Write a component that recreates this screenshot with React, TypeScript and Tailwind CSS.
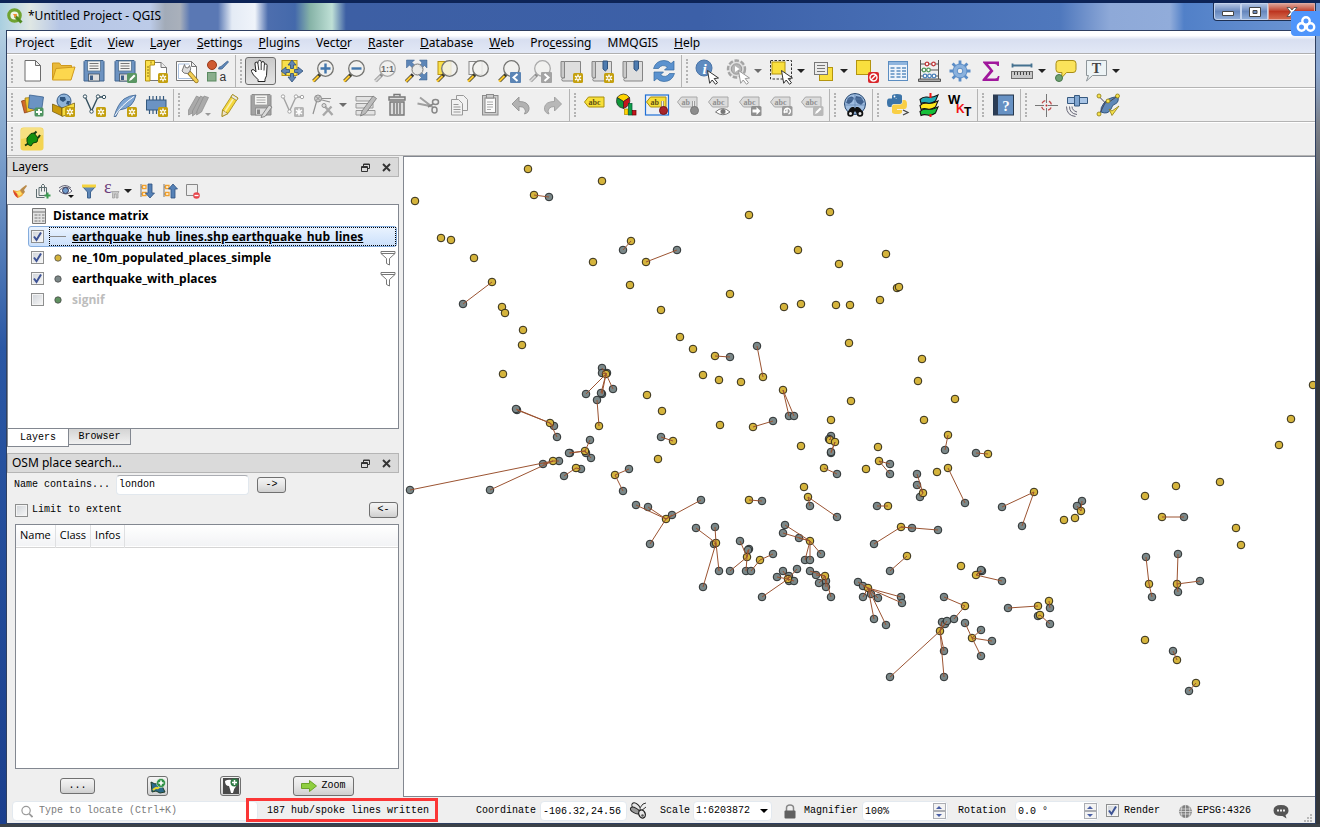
import { useState } from "react";
import type { ReactNode } from "react";

const uiFont = "font-['Noto_Sans','Open_Sans',sans-serif]";
const listFont = "font-['Open_Sans','Noto_Sans',sans-serif]";
const monoFont = "font-['Liberation_Mono',monospace]";

/* ---------- shared icon parts ---------- */

const Star = () => (
  <g>
    <rect x="14" y="14" width="10" height="10" rx="1.5" fill="#c4a010" />
    <path d="M19 15.5v7M16 17.2l6 3.6M22 17.2l-6 3.6" stroke="#fff" strokeWidth="1.5" />
    <circle cx="19" cy="19" r="1" fill="#c4a010" />
  </g>
);

const Lens = ({ gray, children }: { gray?: boolean; children?: ReactNode }) => (
  <g>
    <path d="M9 15.5L2.5 22" stroke={gray ? "#8c8c8c" : "#3b3b2a"} strokeWidth="3.6" />
    <path d="M7.5 17L2 22.5" stroke={gray ? "#d5d5d5" : "#fcc92f"} strokeWidth="2.2" />
    <circle cx="14.5" cy="9.5" r="7.8" fill="#f1f1ee" fillOpacity="0.85" stroke={gray ? "#a9a9a9" : "#757572"} strokeWidth="1.3" />
    {children}
  </g>
);

const Cursor = ({ gray }: { gray?: boolean }) => (
  <path
    d="M12.5 11.5l11 7.5-4.3.6 3.3 4.2-2 1.5-3.3-4.3-2.5 3.3z"
    fill="#fff"
    stroke={gray ? "#999" : "#333"}
    strokeWidth="1"
  />
);

const Floppy = ({ gray }: { gray?: boolean }) => (
  <g>
    <path d="M3 1.5h18l1 1v19.5h-20v-19.5z" fill={gray ? "#a3a3a3" : "#6d93c1"} stroke={gray ? "#8a8a8a" : "#41658f"} />
    <rect x="5.5" y="2" width="13" height="10" fill="#f3f3f1" stroke={gray ? "#999" : "#56748f"} strokeWidth="0.8" />
    <path d="M7.5 4.5h9M7.5 7h9M7.5 9.5h9" stroke={gray ? "#aaa" : "#777"} />
    <rect x="6.5" y="15" width="11" height="7" fill="#dedede" stroke={gray ? "#888" : "#456"} strokeWidth="0.8" />
    <rect x="8" y="16.5" width="3" height="4.5" fill={gray ? "#888" : "#3f5f87"} />
  </g>
);

const Tag = ({ gray, word = "abc" }: { gray?: boolean; word?: string }) => (
  <g>
    <path d="M1.5 9l4-5h15.5v10h-15.5z" fill={gray ? "#dcdcdc" : "#f7df39"} stroke={gray ? "#a8a8a8" : "#a98f0c"} />
    <text x="5.5" y="11.5" fontSize="8" fontWeight="bold" fontFamily="Liberation Serif, serif" fill={gray ? "#8f8f8f" : "#5b4d12"}>
      {word}
    </text>
  </g>
);

const MapPage = () => (
  <g>
    <path d="M2 2.5h3.5v16.5h-2q-1.5 0-1.5-2z" fill="#c9c9c9" stroke="#858585" />
    <path d="M5.5 2.5h16v19.5h-18q-1.5-1.5 0-3h2z" fill="#dedede" stroke="#858585" />
  </g>
);

const Pin = () => (
  <g>
    <path d="M17.5 8v8" stroke="#777" strokeWidth="2.4" />
    <path d="M17.5 8v8" stroke="#eee" strokeWidth="1.2" />
  </g>
);

const VNode = ({ color }: { color: string }) => (
  <g fill="none" stroke={color}>
    <path d="M3.5 4.5l6 13.5 6-13M17 4h4" strokeWidth="1.4" />
    <g fill="#fff">
      <circle cx="3" cy="3.5" r="1.7" />
      <circle cx="9.5" cy="18.5" r="1.7" />
      <circle cx="16" cy="3.5" r="1.7" />
      <circle cx="22" cy="4" r="1.7" />
    </g>
  </g>
);

const Pencil = ({ body, edge }: { body: string; edge: string }) => (
  <g stroke={edge} strokeWidth="0.8">
    <path d="M4.5 17l10-15.5 5.5 3.5-10 15.5-6 3z" fill={body} />
    <path d="M4.5 17l5.5 3.5-6 3z" fill="#eee3c8" />
    <path d="M7 18.5l10-15.5" stroke="#fff" strokeOpacity="0.6" strokeWidth="1.5" />
    <path d="M13 4l5.5 3.5 1.5-2.5-5.5-3.5z" fill="#e8e8e8" />
  </g>
);

const icons: Record<string, ReactNode> = {
  newProject: <path d="M5 1.5h10.5l5 5v15.5h-15.500zM15.500 1.5v5h5" fill="#fff" stroke="#6c6c6c" />,
  open: (
    <g stroke="#d09a1d">
      <path d="M1.5 20v-16h7l1.5 2.5h10.5v4" fill="#e9b93a" />
      <path d="M1.5 21l3.5-11.5 19-1.5-4 13z" fill="#fcd74e" />
    </g>
  ),
  save: <Floppy />,
  saveAs: (
    <g>
      <Floppy />
      <rect x="14" y="14" width="10" height="10" rx="1.5" fill="#5a9663" />
      <path d="M16 22l1-2.5 4-4 1.5 1.5-4 4z" fill="#fff" />
    </g>
  ),
  newLayout: (
    <g>
      <path d="M4 3.5h13l5.5 5v13h-18.5z" fill="#fff" stroke="#777" />
      <path d="M17 3.5v5h5.5" fill="#eee" stroke="#777" />
      <path d="M1.5 1.5h9v4.5h-4.5v16h-4.5z" fill="#fbe04c" stroke="#b08f10" />
      <path d="M3 8h2M3 11h2M3 14h2M3 17h2M7 2.5v2" stroke="#8d7313" />
      <Star />
    </g>
  ),
  layoutManager: (
    <g>
      <path d="M1.5 2.5h15l5 5v14h-20z" fill="#fff" stroke="#777" />
      <path d="M3.5 5h11M3.5 5v14.5h16" fill="none" stroke="#a9c0df" />
      <path d="M16.5 2.5v5h5z" fill="#eee" stroke="#777" />
      <path d="M13.5 13l8 9" stroke="#8b6c12" strokeWidth="4.2" strokeLinecap="round" />
      <path d="M15 14.5l6.5 7.5" stroke="#f3cf55" strokeWidth="2.8" strokeLinecap="round" />
      <path d="M9.5 5.5l1 3 2.5.5 1.5-2.5q2.5 3.5 0 6.5l-2 1.5q-4 .5-5.5-2.5z" fill="#ddd" stroke="#777" />
    </g>
  ),
  style: (
    <g>
      <circle cx="6" cy="6" r="4.5" fill="#cf5b32" stroke="#9a3b1b" />
      <path d="M12.5 10q0-2.5 2.5-2.5l6.500-5.500 1 1-5.500 6q0 1.500-4.500 1z" fill="#5f88b8" stroke="#335a87" strokeWidth="0.7" />
      <rect x="1.5" y="13.5" width="8.5" height="8.5" fill="#8aae8c" stroke="#5b8a61" />
      <text x="13.5" y="22" fontSize="12" fontFamily="Liberation Sans, sans-serif" fill="#333">
        a
      </text>
    </g>
  ),
  pan: (
    <g>
      <path
        d="M9 22.5v-2l-4.5-4.500-2-3.500q-.5-2 1.500-2 1 0 3 2.500l-1-8q-.2-1.800 1.200-1.900 1.300 0 1.600 1.600l.3-2q.3-1.400 1.600-1.400t1.500 1.500l.2 1q.3-1.300 1.600-1.200 1.300.1 1.400 1.600v1.500q.5-1 1.600-.8 1.200.3 1.100 1.800l-.6 10-1.500 3.500v2.300z"
        fill="#fff"
        stroke="#222"
      />
      <path d="M9 5l.8 6M12.200 4v7M15.300 6l-.3 5.500" stroke="#222" strokeWidth="0.9" />
    </g>
  ),
  panSelection: (
    <g>
      <rect x="2" y="1.5" width="15" height="15" fill="#f9e04b" stroke="#b99412" />
      <path
        d="M12 1l4 5h-2.5v3.5h-3v-3.5h-2.500zM12 23l-4-5h2.5v-3.5h3v3.5h2.500zM1 12l5-4v2.5h3.5v3h-3.5v2.500zM23 12l-5 4v-2.5h-3.5v-3h3.500v-2.500z"
        fill="#6086b5"
        stroke="#2f4f7a"
        strokeWidth="0.8"
      />
    </g>
  ),
  zoomIn: (
    <Lens>
      <path d="M14.5 4.5v10M9.5 9.5h10" stroke="#4377ad" strokeWidth="2.4" />
    </Lens>
  ),
  zoomOut: (
    <Lens>
      <path d="M9.5 9.5h10" stroke="#4377ad" strokeWidth="2.4" />
    </Lens>
  ),
  zoomNative: (
    <Lens gray>
      <text x="14.5" y="13" textAnchor="middle" fontSize="9" fontWeight="bold" fontFamily="Liberation Sans, sans-serif" fill="#6a6a6a">
        1:1
      </text>
    </Lens>
  ),
  zoomFull: (
    <g>
      <path
        d="M2.5 1h8l-2.5 2.5 3 3-2.5 2.5-3-3-3 3zM23 1v8l-2.5-2.5-3 3-2.5-2.5 3-3-2.5-3zM23 21h-8l2.5-2.5-3-3 2.5-2.5 3 3 3-3z"
        fill="#5d86b7"
        stroke="#375d8c"
        strokeWidth="0.5"
      />
      <path d="M9 15.5L2 22.5" stroke="#333" strokeWidth="3.4" />
      <path d="M7.5 17L2 22.5" stroke="#fcc92f" strokeWidth="2.2" />
      <circle cx="13.5" cy="10.5" r="5.5" fill="#e9e9e6" fillOpacity="0.85" stroke="#777" />
    </g>
  ),
  zoomSelection: (
    <g>
      <rect x="3" y="2.5" width="13" height="13" fill="#f9e04b" stroke="#b99412" />
      <Lens />
    </g>
  ),
  zoomLayer: (
    <g>
      <rect x="3" y="2.5" width="13" height="13" fill="#f5f5f5" stroke="#888" />
      <Lens />
    </g>
  ),
  zoomLast: (
    <g>
      <Lens />
      <rect x="13" y="13" width="11" height="11" rx="1" fill="#5c85b5" />
      <path d="M20.5 15l-4 3.5 4 3.5" fill="none" stroke="#fff" strokeWidth="2" />
    </g>
  ),
  zoomNext: (
    <g>
      <Lens gray />
      <rect x="13" y="13" width="11" height="11" rx="1" fill="#a4a4a4" />
      <path d="M16.5 15l4 3.5-4 3.5" fill="none" stroke="#fff" strokeWidth="2" />
    </g>
  ),
  newView: (
    <g>
      <MapPage />
      <Star />
    </g>
  ),
  newBookmark: (
    <g>
      <MapPage />
      <path d="M13 2h4.5v8l-2.2 2-2.3-2z" fill="#4d7bb0" stroke="#2e527f" />
      <Star />
    </g>
  ),
  bookmarks: (
    <g>
      <MapPage />
      <path d="M13 2h4.5v8l-2.2 2-2.3-2z" fill="#4d7bb0" stroke="#2e527f" />
    </g>
  ),
  refresh: (
    <g fill="#5b92cf" stroke="#34689f" strokeWidth="0.7">
      <path d="M1.5 9.5q2.500-8 10.500-8 4.500 0 7 3l3-2.500v9h-9.500l3-3q-5.500-3.500-9 1.500z" />
      <path d="M22.5 14.500q-2.500 8-10.500 8-4.500 0-7-3l-3 2.500v-9h9.500l-3 3q5.500 3.500 9-1.500z" />
    </g>
  ),
  identify: (
    <g>
      <circle cx="9" cy="9" r="8" fill="#5e8bc0" stroke="#4a75a8" />
      <text x="9.5" y="14.5" textAnchor="middle" fontSize="15" fontStyle="italic" fontWeight="bold" fontFamily="Liberation Serif, serif" fill="#fff">
        i
      </text>
      <Cursor />
    </g>
  ),
  action: (
    <g>
      <circle cx="10.5" cy="10" r="8.5" fill="#dedede" stroke="#a3a3a3" strokeWidth="2.4" strokeDasharray="4.5 1.8" />
      <circle cx="10.5" cy="10" r="5.2" fill="#b6b6b6" stroke="#999" />
      <path d="M9 7l4.5 3-4.5 3z" fill="#fff" />
      <Cursor gray />
    </g>
  ),
  select: (
    <g>
      <rect x="1.5" y="1.5" width="21" height="18.5" fill="none" stroke="#333" strokeDasharray="2.5 1.5" />
      <rect x="3" y="3" width="13" height="12" fill="#f9df3e" stroke="#b4950f" />
      <Cursor />
    </g>
  ),
  selectForm: (
    <g>
      <rect x="7.5" y="8.5" width="13" height="13" fill="#f9df3e" stroke="#b4950f" />
      <rect x="2.5" y="3.5" width="13" height="12" fill="#ebebeb" stroke="#777" />
      <path d="M5 6.5h8M5 9.5h8M5 12.5h8" stroke="#777" />
    </g>
  ),
  deselect: (
    <g>
      <rect x="1.5" y="1.5" width="14" height="14" fill="#f9df3e" stroke="#b4950f" />
      <rect x="13" y="13" width="11" height="11" rx="2" fill="#d9262b" />
      <circle cx="18.5" cy="18.5" r="3.5" fill="none" stroke="#fff" strokeWidth="1.4" />
      <path d="M16 21l5-5" stroke="#fff" strokeWidth="1.4" />
    </g>
  ),
  table: (
    <g>
      <rect x="2.5" y="2.5" width="19" height="19" fill="#eef4fb" stroke="#5b8dc1" />
      <rect x="3" y="3" width="18" height="3" fill="#8fb5de" />
      <path
        d="M4.5 9h4M10.5 9h4M16 9h4M4.5 12h4M10.5 12h4M16 12h4M4.5 15h4M10.5 15h4M16 15h4M4.5 18h4M10.5 18h4M16 18h4"
        stroke="#5b8dc1"
        strokeWidth="1.5"
      />
    </g>
  ),
  abacus: (
    <g>
      <path d="M3.5 1v21M21.5 1v21M3 5h19M3 11h19M3 17h19" stroke="#555" fill="none" />
      <path d="M1.5 20h22v2.5h-22z" fill="#aaa" stroke="#555" />
      <g fill="#fff" strokeWidth="1.3">
        <g stroke="#c0393b">
          <circle cx="10" cy="5" r="1.8" />
          <circle cx="16.5" cy="5" r="1.8" />
        </g>
        <g stroke="#569a5e">
          <circle cx="7" cy="11" r="1.8" />
          <circle cx="11.5" cy="11" r="1.8" />
        </g>
        <g stroke="#4d82ba">
          <circle cx="8" cy="17" r="1.8" />
          <circle cx="12.5" cy="17" r="1.8" />
          <circle cx="17" cy="17" r="1.8" />
        </g>
      </g>
    </g>
  ),
  gear: (
    <g stroke="#5a8cc6">
      <path d="M12 1.5v21M1.5 12h21M4.6 4.6l14.8 14.8M19.4 4.6l-14.8 14.8" strokeWidth="2.8" />
      <circle cx="12" cy="12" r="7" fill="#8ab1dd" />
      <circle cx="12" cy="12" r="2.8" fill="#efefef" />
    </g>
  ),
  sum: (
    <path
      d="M4 2.5h16v4.5h-1.5q-.5-2-3-2h-6.5l5.5 7-6.500 7.500h8q2.500 0 3-2.500h1.500l-1 5h-16v-1.500l7.500-9-7-8z"
      fill="#a0179c"
    />
  ),
  measure: (
    <g>
      <path d="M2 6.5h20M2.5 4.5v4M21.5 4.5v4" stroke="#44718f" strokeWidth="1.8" />
      <rect x="1.5" y="12.5" width="21" height="7" fill="#c8c8c8" stroke="#6d6d6d" />
      <path d="M4.5 13v3M7.5 13v3M10.5 13v3M13.5 13v3M16.5 13v3M19.5 13v3" stroke="#444" />
    </g>
  ),
  tips: (
    <g>
      <path
        d="M6 1.5h14q3 0 3 3v6q0 3-3 3h-6.500l-5 5.500.5-5.500h-3q-3 0-3-3v-6q0-3 3-3z"
        fill="#fbe35a"
        stroke="#a78d17"
      />
      <circle cx="6" cy="19" r="3.5" fill="#6ea072" stroke="#457649" />
    </g>
  ),
  annotation: (
    <g>
      <path d="M2.5 1.5h20v15h-14l-6 5.5 2-5.5h-2z" fill="#edf3f5" stroke="#8d9599" />
      <text x="12.5" y="13.5" textAnchor="middle" fontSize="14" fontFamily="Liberation Serif, serif" fontWeight="bold" fill="#444">
        T
      </text>
    </g>
  ),
  sourceManager: (
    <g strokeWidth="0.8">
      <path d="M1.5 8l12-3 3 11-12 4z" fill="#d2692b" stroke="#8f3e12" />
      <path d="M5 5l12-1 1 12-11 3z" fill="#f0c32e" stroke="#a17c10" />
      <path d="M9.5 2l14 2-2 14-13-3z" fill="#6b93c3" stroke="#38608f" />
      <rect x="14.5" y="14.5" width="9" height="9" rx="1.5" fill="#4f9460" />
      <path d="M19 16v6M16 19h6" stroke="#fff" strokeWidth="1.8" />
    </g>
  ),
  geopackage: (
    <g>
      <circle cx="13" cy="8" r="7" fill="#8eb3d9" stroke="#3b5f8b" />
      <path d="M9 4l5 0 1 3-3 2-3-2zM16 8l3 0-1 4-3-1z" fill="#2f547e" />
      <path d="M1.5 11l9.5 4v8l-9.5-4.5z" fill="#c9990a" stroke="#6d5407" strokeWidth="0.7" />
      <path d="M11 15l12.5-5v9l-12.5 4.5z" fill="#f7dd43" stroke="#6d5407" strokeWidth="0.7" />
      <Star />
    </g>
  ),
  newShape: (
    <g>
      <VNode color="#34505f" />
      <Star />
    </g>
  ),
  feather: (
    <g>
      <path d="M1 23.5q4-13 10-17.5 5-3.500 12-4-1.500 6.500-5 10-5 4.500-12 5l-3 6.500z" fill="#7fa6d3" stroke="#3b618e" strokeWidth="0.8" />
      <path d="M2 22.5q6-10 19-19" fill="none" stroke="#fff" />
      <Star />
    </g>
  ),
  memory: (
    <g>
      <path d="M5.5 3v18M9 3v18M12.5 3v18M16 3v18M19.5 3v18" stroke="#34597f" strokeWidth="1.2" />
      <rect x="2.5" y="7" width="19.5" height="10" fill="#6b93c3" stroke="#34597f" />
      <Star />
    </g>
  ),
  edits: (
    <g>
      <g fill="#aaa" stroke="#8b8b8b" strokeWidth="0.7">
        <path d="M1.5 17l8-14 4 2-8 15-4 2z" />
        <path d="M5.5 18l8-15 4 2-8 15-4 3z" />
        <path d="M10 18l7-15 4.5 1.5-7 14.5-5 3z" />
      </g>
      <path d="M18 20h6l-3 3z" fill="#999" />
    </g>
  ),
  toggleEdit: <Pencil body="#f4d83c" edge="#a08617" />,
  saveEdits: (
    <g>
      <Floppy gray />
      <path d="M13 22l7-10 3 2-7 9.5-4 1z" fill="#d9d9d9" stroke="#888" />
    </g>
  ),
  addFeature: (
    <g>
      <VNode color="#a3a3a3" />
      <rect x="14" y="14" width="10" height="10" rx="1.5" fill="#b5b5b5" />
      <path d="M19 15.5v7M16 17.2l6 3.6M22 17.2l-6 3.6" stroke="#fff" strokeWidth="1.5" />
    </g>
  ),
  vertex: (
    <g fill="none" stroke="#929292">
      <path d="M2 21l4-14M8 5.5h12M9 6.5l10 2.500" strokeWidth="1.2" />
      <circle cx="7" cy="5.5" r="3.5" fill="#ccc" />
      <path d="M4.500 3l5 5M9.500 3l-5 5" />
      <path d="M12 22.500l8.500-9M14 13.500l7.500 8.500" stroke="#a8a8a8" strokeWidth="2.4" />
      <circle cx="13" cy="12.5" r="2" fill="#ddd" />
    </g>
  ),
  multiEdit: (
    <g>
      <path d="M2 3.5h17v4.5h-17zM2 10.5h17v4.5h-17zM2 17.5h19v4.5h-19z" fill="#e3e3e3" stroke="#999" />
      <path d="M8 18l11-15 3.5 2.5-11 15-5 2.5z" fill="#bcbcbc" stroke="#777" strokeWidth="0.8" />
    </g>
  ),
  trash: (
    <g fill="#ddd" stroke="#777" strokeWidth="1.4">
      <path d="M9 3.5v-2h6v2" fill="none" />
      <path d="M4 4h16v3h-16zM5 9h14v13h-14z" />
      <path d="M9 10v11M12 10v11M15 10v11" />
    </g>
  ),
  cut: (
    <g fill="none" stroke="#888" strokeWidth="1.5">
      <path d="M1.5 10.5l15 3M4 4.5l13 10" strokeWidth="2" stroke="#a0a0a0" />
      <ellipse cx="19.5" cy="9" rx="3" ry="2.5" />
      <ellipse cx="18.5" cy="17" rx="2.5" ry="3" />
      <path d="M17 11l-5 3" />
    </g>
  ),
  copy: (
    <g fill="#f2f2f2" stroke="#999">
      <path d="M9.5 2.5h7l4 4v11h-11z" />
      <path d="M4.5 6.5h7l4 4v11.5h-11z" />
      <path d="M6.5 11.5h5M6.5 14h7M6.5 16.5h7M6.5 19h7" />
    </g>
  ),
  paste: (
    <g fill="#ccc" stroke="#8b8b8b">
      <rect x="4.5" y="2.5" width="15.5" height="19.5" />
      <rect x="7" y="5" width="10.5" height="14.5" fill="#fafafa" />
      <rect x="8.5" y="1.5" width="7" height="3.5" />
      <path d="M9 9h6M9 11.5h6M9 14h6M9 16.5h4" stroke="#aaa" />
    </g>
  ),
  undo: <path d="M3 11l7-7v4.5q9 0 10 6 .5 5-4.500 6.500 2-3 0-5.500-1.500-2-5.500-2v4.500z" fill="#b2b2b2" stroke="#999" />,
  redo: <path d="M21.500 11l-7-7v4.500q-9 0-10 6-.5 5 4.500 6.500-2-3 0-5.500 1.500-2 5.500-2v4.500z" fill="#b8b8b8" stroke="#a3a3a3" />,
  label: <Tag />,
  diagram: (
    <g strokeWidth="0.7">
      <path d="M9.5 8.5l-6.500-4q3-3.500 6.500-3.500t6 3.500z" fill="#ffd400" stroke="#222" />
      <path d="M9.5 8.5l-6.500-4q-2.500 9 6.500 11z" fill="#10973a" stroke="#222" />
      <path d="M9.5 8.5l6-4q2 8-6 11z" fill="#c5151b" stroke="#222" />
      <rect x="10.5" y="16" width="3.5" height="5.5" fill="#ffd400" stroke="#a80" />
      <rect x="14.5" y="10.5" width="3.5" height="11.5" fill="#0fa04c" stroke="#053" />
      <rect x="18.5" y="17.5" width="3.5" height="4.5" fill="#c5151b" stroke="#600" />
    </g>
  ),
  pinned: (
    <g>
      <rect x="0.5" y="2" width="23" height="20" fill="#eceff4" stroke="#1f6fd6" strokeWidth="1.2" />
      <Tag word="ab" />
      <Pin />
      <circle cx="18.5" cy="17.5" r="4" fill="#a8252b" stroke="#75151a" />
    </g>
  ),
  unpin: (
    <g>
      <Tag gray word="ab" />
      <Pin />
      <circle cx="18.5" cy="17.5" r="4" fill="#8c8c8c" stroke="#777" />
    </g>
  ),
  showLabel: (
    <g>
      <Tag gray />
      <path d="M8.5 19q7-7 14.5 0-7 5.5-14.5 0z" fill="#fff" stroke="#777" />
      <circle cx="16" cy="18.5" r="2.5" fill="#777" />
    </g>
  ),
  moveLabel: (
    <g>
      <Tag gray />
      <rect x="13" y="13" width="10.5" height="10" rx="1.5" fill="#8f8f8f" />
      <path d="M14.5 16.500h4v-2.500l4 4-4 4v-2.500h-4z" fill="#fff" />
    </g>
  ),
  rotateLabel: (
    <g>
      <Tag gray />
      <rect x="13" y="13" width="10.5" height="10" rx="1.5" fill="#9b9b9b" />
      <path d="M16 20a3 3 0 1 1 3.5 1M14.5 19h3.5v-3" fill="none" stroke="#fff" strokeWidth="1.4" />
    </g>
  ),
  changeLabel: (
    <g>
      <Tag gray />
      <rect x="13" y="13" width="10.5" height="10" rx="1.5" fill="#b9b9b9" />
      <path d="M15 21l1-2.5 4-4 1.5 1.5-4 4z" fill="#fff" />
    </g>
  ),
  search: (
    <g>
      <circle cx="12" cy="11" r="10.5" fill="#9fbde0" stroke="#26476f" />
      <path d="M5 5q4-3 6 0l-2 4-3 2-3-1zM13 3l5 1 3 5-3 3-4-2-2-4z" fill="#40618e" />
      <path d="M2 12h20M12 1v20M4 6h16" stroke="#5f82ad" strokeWidth="0.7" />
      <path d="M5 20q1-5 4-6h2l1 1.500 1-1.500h2q3 1 5 6l-6 1-1.500-2.500h-1l-1.500 2.500z" fill="#111" />
      <circle cx="7.5" cy="20.5" r="2.4" fill="#e9e9e9" stroke="#111" strokeWidth="1.8" />
      <circle cx="17" cy="20.5" r="2.4" fill="#e9e9e9" stroke="#111" strokeWidth="1.8" />
    </g>
  ),
  python: (
    <g>
      <path d="M6 6v-3q0-2 5-2t5 2v6q0 2-2 2h-6q-2.5 0-2.5 3h-2q-2.500 0-2.500-4.500t2.500-4h7.500v-.5z" fill="#3c74a8" />
      <path d="M16.5 7h2q2.500 0 2.500 4.500t-2.500 4.500h-7.500v1h5v2q0 2-5 2t-5-2v-5q0-2.500 2.500-2.500h5.500q2.500 0 2.500-2.500z" fill="#f9cf45" />
      <circle cx="8.5" cy="3.5" r="0.9" fill="#fff" />
      <path d="M17 17l5 2.5-5 2.5" fill="none" stroke="#444" strokeWidth="1.3" />
    </g>
  ),
  stack: (
    <g stroke="#111" strokeWidth="1.1">
      <path d="M3 18.500q3-3 7-2.500 5 1 11-2l-2.500 6q-4 3-8 2-4-1-6.500.5z" fill="#16c03a" />
      <path d="M3 12.500q3-3 7-2.500 5 1 11-2l-2.500 6q-4 3-8 2-4-1-6.500.5z" fill="#ffe81d" />
      <path d="M3 6.500q3-3 7-2.500 5 1 11-2l-2.500 6q-4 3-8 2-4-1-6.500.5z" fill="#1fa9b4" />
      <path d="M13.5 0v5M13.5 21v3" stroke="#f01414" strokeWidth="2" />
    </g>
  ),
  wkt: (
    <g fontFamily="Liberation Sans, sans-serif" fontWeight="bold">
      <text x="0" y="11" fontSize="13" fill="#000">
        W
      </text>
      <text x="8" y="20" fontSize="12" fill="#f31616">
        K
      </text>
      <text x="16" y="23" fontSize="12" fill="#000">
        T
      </text>
    </g>
  ),
  help: (
    <g>
      <rect x="2.5" y="2" width="20" height="20" fill="#6791c3" stroke="#26374c" />
      <rect x="2.5" y="2" width="4.5" height="20" fill="#2b3c55" />
      <text x="15" y="17.5" textAnchor="middle" fontSize="15" fontWeight="bold" fontFamily="Liberation Serif, serif" fill="#fff">
        ?
      </text>
    </g>
  ),
  crosshair: (
    <g fill="none">
      <path d="M1 12.5h9M14 12.5h10M12.5 1v9M12.5 15v9" stroke="#777" />
      <circle cx="12.5" cy="12.5" r="5" stroke="#c04b4b" strokeWidth="1.3" strokeDasharray="4 3.85" strokeDashoffset="-2" />
      <circle cx="12.5" cy="12.5" r="1" fill="#c02020" />
    </g>
  ),
  satellite: (
    <g>
      <g fill="#a9c5e6" stroke="#37597f">
        <path d="M2.5 4.5h7v6h-7zM14.5 4.5h8v6h-8z" />
        <path d="M9.5 2.5h5v10.5h-5z" fill="#7ea4cf" />
      </g>
      <path d="M7 13.5q0 4 5 5.5M4.5 13.5q0 7 7.5 8M1.5 13.5q0 9 9 10" fill="none" stroke="#667" />
    </g>
  ),
  topology: (
    <g>
      <path d="M5 19q-1-4 3-9 3-4 7-5t7-2q1 6-2 7.500-4 1-5 5.500-3 6-10 3z" fill="#5f88b8" stroke="#31557f" />
      <path d="M2.5 3l7 7 5-2 7-5M9 10l-5 10" fill="none" stroke="#445" />
      <g fill="#f6e14a" stroke="#8b7a14" strokeWidth="0.8">
        <circle cx="3" cy="3" r="2" />
        <circle cx="21.5" cy="3" r="2" />
        <circle cx="12" cy="8" r="2" />
        <circle cx="3" cy="21" r="2" />
        <path d="M13 16l3 2 7-5-7 9.500z" />
      </g>
    </g>
  ),
  plug: (
    <g>
      <rect x="0.5" y="0.5" width="23" height="23" rx="3" fill="#f3d452" />
      <path d="M1 12v-8q0-3 3-3h16q3 0 3 3v4z" fill="#f7e081" />
      <path d="M5 18.5l4-2.5M14 7l2.5-2.5M18 11l2-3" stroke="#173c12" strokeWidth="2" />
      <path d="M7 11l4-4.5 3-.5 4 5-1 4-4 1-2 3-3-1.5-1-3z" fill="#12900f" stroke="#0a400a" />
    </g>
  ),
};

const Icon = ({ name }: { name: string }) => (
  <svg viewBox="0 0 24 24" className="h-6 w-6 shrink-0 overflow-visible" aria-hidden="true">
    {icons[name]}
  </svg>
);

/* ---------- tool bars ---------- */

type Tool = { icon: string; menu?: boolean; dim?: boolean };

const toTools = (names: string[]): Tool[] => names.map((icon) => ({ icon }));

const fileTools = toTools(["newProject", "open", "save", "saveAs", "newLayout", "layoutManager", "style"]);

const navTools = toTools([
  "pan", "panSelection", "zoomIn", "zoomOut", "zoomNative", "zoomFull", "zoomSelection",
  "zoomLayer", "zoomLast", "zoomNext", "newView", "newBookmark", "bookmarks", "refresh",
]);

const attributeTools: Tool[] = [
  { icon: "identify" },
  { icon: "action", menu: true, dim: true },
  { icon: "select", menu: true },
  { icon: "selectForm", menu: true },
  { icon: "deselect" },
  { icon: "table" },
  { icon: "abacus" },
  { icon: "gear" },
  { icon: "sum" },
  { icon: "measure", menu: true },
  { icon: "tips" },
  { icon: "annotation", menu: true },
];

const sourceTools = toTools(["sourceManager", "geopackage", "newShape", "feather", "memory"]);

const editTools: Tool[] = [
  ...toTools(["edits", "toggleEdit", "saveEdits", "addFeature"]),
  { icon: "vertex", menu: true, dim: true },
  ...toTools(["multiEdit", "trash", "cut", "copy", "paste", "undo", "redo"]),
];

const labelTools = toTools(["label", "diagram", "pinned", "unpin", "showLabel", "moveLabel", "rotateLabel", "changeLabel"]);
const pluginTools = toTools(["python", "stack", "wkt"]);
const extraTools = toTools(["crosshair", "satellite", "topology"]);

type ToolGroupProps = {
  tools: Tool[];
  last?: boolean;
  active?: string;
  onPick?: (icon: string) => void;
};

const ToolGroup = ({ tools, last, active, onPick }: ToolGroupProps) => (
  <div className={`flex h-full items-center ${last ? "" : "border-r border-[#b4b4b4] pr-0.5"}`}>
    <div className="flex w-[9px] justify-center">
      <div className="h-6 border-l-2 border-dotted border-[#b3b3b3]" />
    </div>
    {tools.map(({ icon, menu, dim }) => (
      <button
        key={icon}
        type="button"
        aria-label={icon}
        onClick={() => onPick?.(icon)}
        className={`flex h-7 shrink-0 items-center ${menu ? "w-[43px] gap-0.5 pl-1" : "w-[31px] justify-center"} ${
          active === icon ? "rounded-[3px] border border-[#6e6e6e] bg-linear-to-b from-[#c9c9c9] to-[#e4e4e4]" : ""
        }`}
      >
        <Icon name={icon} />
        {menu && (
          <svg viewBox="0 0 8 4" className={`ml-0.5 h-1 w-2 shrink-0 ${dim ? "text-[#6c6c6c]" : "text-[#222]"}`}>
            <path d="M0 0h8l-4 4z" fill="currentColor" />
          </svg>
        )}
      </button>
    ))}
  </div>
);

const ToolRow = ({ children }: { children: ReactNode }) => (
  <div className="flex h-[34px] border-t border-b border-t-white border-b-[#b4b4b4]">{children}</div>
);

/* ---------- menu ---------- */

// [text before the mnemonic, mnemonic, rest]
const menus = [
  ["Pro", "j", "ect"],
  ["", "E", "dit"],
  ["", "V", "iew"],
  ["", "L", "ayer"],
  ["", "S", "ettings"],
  ["", "P", "lugins"],
  ["Vect", "o", "r"],
  ["", "R", "aster"],
  ["", "D", "atabase"],
  ["", "W", "eb"],
  ["Pro", "c", "essing"],
  ["MMQGIS", "", ""],
  ["", "H", "elp"],
];

/* ---------- form parts ---------- */

const CheckBox = ({ id, checked = false, label }: { id: string; checked?: boolean; label?: string }) => (
  <span className="relative flex h-[13px] w-[13px] shrink-0">
    <input
      id={id}
      type="checkbox"
      aria-label={label}
      defaultChecked={checked}
      className="peer h-[13px] w-[13px] appearance-none border border-[#8e8f8f] bg-linear-to-br from-[#cfd3d8] to-[#f8f8f8] shadow-[inset_0_0_0_1px_#f4f4f4]"
    />
    <svg viewBox="0 0 13 13" className="pointer-events-none absolute inset-0 hidden h-[13px] w-[13px] peer-checked:block">
      <path d="M3 6.5l2.5 3.5 4.5-7.5" fill="none" stroke="#3d5294" strokeWidth="2" />
    </svg>
  </span>
);

const pushButton =
  "flex items-center justify-center rounded-[3px] border border-[#707070] bg-linear-to-b from-[#f4f4f4] via-[#e6e6e6] to-[#cfcfcf]";

const SpinBox = ({ id, value, width }: { id: string; value: string; width: string }) => (
  <span className={`flex h-5 items-center rounded-sm border border-[#e3e9ef] bg-white pr-px ${width}`}>
    <input id={id} defaultValue={value} className="h-full w-full min-w-0 px-0.5 outline-none" />
    <span className="flex h-4 flex-col">
      {["M0 3h6l-3-3z", "M0 0h6l-3 3z"].map((d, i) => (
        <button
          key={d}
          type="button"
          aria-label={i ? "Decrease" : "Increase"}
          className="flex h-2 w-[13px] items-center justify-center border border-[#abadb3] bg-[#f3f3f3]"
        >
          <svg viewBox="0 0 6 3" className="h-[3px] w-1.5">
            <path d={d} fill="#4a5fa5" />
          </svg>
        </button>
      ))}
    </span>
  </span>
);

const DockTitle = ({ title }: { title: string }) => (
  <div className="flex h-5 shrink-0 items-center justify-between border border-[#b5b5b5] bg-[#dadada] pr-[7px] pl-1">
    <h2 className="text-xs leading-4">{title}</h2>
    <div className="flex gap-3">
      <button type="button" aria-label={`Float ${title}`}>
        <svg viewBox="0 0 9 9" className="h-[9px] w-[9px]" fill="none" stroke="#333">
          <path d="M2.5 3v-2h6v4.5h-2M2.5 1.5h6M.5 3.5h6v5h-6zM.5 4.5h6" />
        </svg>
      </button>
      <button type="button" aria-label={`Close ${title}`}>
        <svg viewBox="0 0 9 9" className="h-[9px] w-[9px]">
          <path d="M1 1l7 7M8 1l-7 7" stroke="#333" strokeWidth="1.9" />
        </svg>
      </button>
    </div>
  </div>
);

const SmallIcon = ({ children }: { children: ReactNode }) => (
  <svg viewBox="0 0 16 16" className="h-4 w-4 shrink-0 overflow-visible">
    {children}
  </svg>
);

/* ---------- layers panel ---------- */

const layerTools: { name: string; art: ReactNode }[] = [
  {
    name: "Styling",
    art: (
      <g>
        <path d="M1 7l4 1 4-1 3 3-2 3-4 2q-4-2-5-8z" fill="#f2a93b" />
        <path d="M1 7q1 6 5 8l-1-4z" fill="#d9442e" />
        <path d="M4 9l3 4 3-2-2-3z" fill="#fbe16b" />
        <path d="M8 7l3 4 2-2-1-2 3-4-1-1-4 3z" fill="#b98a4a" />
      </g>
    ),
  },
  {
    name: "Add group",
    art: (
      <g fill="none" stroke="#5d6d70">
        <path d="M1.5 6v8.5h8M4 4.5v8h7.500v-8zM6.5 8.500v-6q1.500-3 3 0v6" />
        <path d="M12.500 9.500v6M9.500 12.500h6" stroke="#3d9a50" strokeWidth="2" />
      </g>
    ),
  },
  {
    name: "Visibility",
    art: (
      <g>
        <path d="M1 8q7-8 13 0-6 6-13 0z" fill="#fff" stroke="#667" />
        <circle cx="7.5" cy="7.5" r="3" fill="#6f9bcb" stroke="#335" />
        <path d="M1 5q6-5 12 0" fill="none" stroke="#667" />
        <path d="M10 12h6l-3 3z" fill="#111" />
      </g>
    ),
  },
  {
    name: "Filter",
    art: (
      <g>
        <path d="M1.5 3.5h13l-5 5.5v6h-3v-6z" fill="#5f88b8" stroke="#3b628f" />
        <path d="M1 1.5h14v3h-14z" fill="#f5d33e" />
      </g>
    ),
  },
];

const layers = [
  { name: "ne_10m_populated_places_simple", dot: "#d5b43c", checked: true, filtered: true },
  { name: "earthquake_with_places", dot: "#7b8787", checked: true, filtered: true },
  { name: "signif", dot: "#5f9160", checked: false, filtered: false },
];

const TreeArrow = ({ up }: { up?: boolean }) => (
  <SmallIcon>
    <path d="M2 1v13M2 4h4M2 11h4" stroke="#777" fill="none" />
    <path d="M3.5 2.5h3.5v3h-3.500zM3.500 9.500h3.500v3h-3.500z" fill="#fff" stroke="#f0a02c" strokeWidth="1.3" />
    <path
      d={up ? "M11 1l4.5 5h-2.5v9h-4v-9h-2.500z" : "M11 15l4.500-5h-2.500v-9h-4v9h-2.500z"}
      fill="#5682b7"
      stroke="#2d5280"
      strokeWidth="0.8"
    />
  </SmallIcon>
);

const LayersPanel = () => (
  <section className="flex flex-col">
    <DockTitle title="Layers" />
    <div className="flex h-[27px] items-center gap-[7px] pl-[5px]">
      {layerTools.map(({ name, art }) => (
        <button key={name} type="button" aria-label={name}>
          <SmallIcon>{art}</SmallIcon>
        </button>
      ))}
      <button type="button" aria-label="Filter by expression" className="flex items-center gap-1">
        <SmallIcon>
          <text x="0" y="10" fontSize="18" fontFamily="Liberation Serif, serif" fill="#6a3d7b">
            ε
          </text>
          <path d="M7.5 8.5h7.5l-1 2v4.500h-2v-4h-1.500v4h-2v-4.500z" fill="#c9c9c9" stroke="#999" strokeWidth="0.7" />
        </SmallIcon>
        <svg viewBox="0 0 8 4" className="h-1 w-2">
          <path d="M0 0h8l-4 4z" fill="#222" />
        </svg>
      </button>
      <button type="button" aria-label="Expand all">
        <TreeArrow />
      </button>
      <button type="button" aria-label="Collapse all">
        <TreeArrow up />
      </button>
      <button type="button" aria-label="Remove layer">
        <SmallIcon>
          <path d="M1.5 1.5h11v11h-11z" fill="#eee" stroke="#888" />
          <circle cx="11.5" cy="12.5" r="3.3" fill="#e8474d" />
          <path d="M9.5 12.5h4" stroke="#fff" strokeWidth="1.3" />
        </SmallIcon>
      </button>
    </div>
    <ul className={`h-[225px] border border-[#828790] bg-white text-xs font-bold ${listFont}`}>
      <li className="flex h-[21px] items-center gap-[7px] pl-6">
        <svg viewBox="0 0 14 16" className="h-4 w-3.5">
          <path d="M.5.5h13v15h-13z" fill="#e3e3e3" stroke="#777" />
          <path d="M1 4h12M2.5 7h3M6.5 7h2M10 7h2.5M2.5 10h3M6.5 10h2M10 10h2.5M2.5 13h3M6.5 13h2M10 13h2.5" stroke="#777" />
        </svg>
        Distance matrix
      </li>
      <li className="mr-px ml-5 flex h-[21px] items-center rounded-[3px] border border-[#84acdd] bg-linear-to-b from-[#eaf3fe] to-[#cbe0fb] pl-0.5">
        <CheckBox id="layer-hub-lines" label="earthquake_hub_lines" checked />
        <label htmlFor="layer-hub-lines" className="ml-[5px] flex h-full flex-1 items-center border border-dotted border-black">
          <span className="mr-1.5 h-px w-4 bg-[#8a8a8a]" />
          <span className="underline">earthquake_hub_lines.shp earthquake_hub_lines</span>
        </label>
      </li>
      {layers.map(({ name, dot, checked, filtered }) => (
        <li key={name} className="flex h-[21px] items-center pr-0.5 pl-[23px]">
          <CheckBox id={name} label={name} checked={checked} />
          <svg viewBox="0 0 8 8" className="mr-2.5 ml-2.5 h-2 w-2">
            <circle cx="4" cy="4" r="3.2" fill={dot} stroke="#4b4b4b" strokeWidth="0.8" />
          </svg>
          <label htmlFor={name} className={`flex-1 ${checked ? "" : "text-[#bdbdbd]"}`}>
            {name}
          </label>
          {filtered && (
            <svg viewBox="0 0 16 16" className="h-4 w-4">
              <path d="M1 1.5h14v2l-5.5 5v6.5l-3-1.500v-5l-5.500-5zM1 3.500h14" fill="#fff" stroke="#777" />
            </svg>
          )}
        </li>
      ))}
    </ul>
    <div className={`flex h-[18px] items-start text-[10px] ${monoFont}`}>
      <button type="button" className="h-[18px] w-[62px] border border-t-0 border-[#828790] bg-white">
        Layers
      </button>
      <button
        type="button"
        className="h-4 w-[62px] border border-t-0 border-l-0 border-[#828790] bg-linear-to-b from-[#d4d4d4] to-[#f0f0f0]"
      >
        Browser
      </button>
    </div>
  </section>
);

/* ---------- place search panel ---------- */

const SearchPanel = () => {
  const [query, setQuery] = useState("london");

  return (
    <section className={`mt-1.5 flex flex-1 flex-col text-[10px] ${monoFont}`}>
      <div className={uiFont}>
        <DockTitle title="OSM place search..." />
      </div>
      <div className="flex h-[23px] items-center pl-[7px]">
        <label htmlFor="place-name" className="w-[102px]">
          Name contains...
        </label>
        <input
          id="place-name"
          value={query}
          onChange={(e) => setQuery(e.target.value)}
          className="h-5 w-[133px] rounded-sm border border-[#e2e8ee] border-t-[#abadb3] bg-white px-0.5 outline-none"
        />
        <button type="button" className={`ml-2 h-4 w-[29px] ${pushButton}`}>
          -&gt;
        </button>
      </div>
      <div className="flex h-7 items-center pr-px pl-2">
        <CheckBox id="limit" />
        <label htmlFor="limit" className="ml-1 flex-1">
          Limit to extent
        </label>
        <button type="button" className={`h-4 w-[29px] ${pushButton}`}>
          &lt;-
        </button>
      </div>
      <div className={`ml-2 flex-1 border border-[#828790] bg-white text-[11px] ${listFont}`}>
        <table className="w-full">
          <thead>
            <tr className="h-[22px] border-b border-[#d5d5d5] bg-linear-to-b from-white to-[#f2f3f5] text-left">
              {["Name", "Class", "Infos"].map((col) => (
                <th key={col} className="w-px border-r border-[#dfe0e2] px-1 font-normal">
                  {col}
                </th>
              ))}
              <td />
            </tr>
          </thead>
        </table>
      </div>
      <div className="flex h-7 items-center justify-between pt-1.5 pr-[45px] pl-[53px]">
        <button type="button" className={`h-4 w-[35px] ${pushButton}`}>
          ...
        </button>
        <button type="button" aria-label="Add to map" className={`h-5 w-[21px] ${pushButton}`}>
          <SmallIcon>
            <path d="M1 4l4 2 5-2 5 10-5 1-4-2-4 1z" fill="#2c6a8a" stroke="#1d3d2a" />
            <path d="M3 12q3-3 4-2t4-3" stroke="#e5d42c" strokeWidth="2" fill="none" />
            <circle cx="11" cy="5" r="4.5" fill="#2f9145" stroke="#fff" strokeWidth="0.5" />
            <path d="M11 2.5v5M8.500 5h5" stroke="#fff" strokeWidth="1.6" />
          </SmallIcon>
        </button>
        <button type="button" aria-label="Add as mask" className={`h-5 w-[21px] ${pushButton}`}>
          <SmallIcon>
            <path d="M0 0h16v16h-16z" fill="#4a4a4a" />
            <path d="M2 3q3-2 7-1 1 3 5 5-3 3-4 8h-2q-1-4-2-7-4 0-4-5z" fill="#fff" />
            <circle cx="11.5" cy="4.5" r="4" fill="#2f7a45" />
            <path d="M11.500 2v5M9 4.500h5" stroke="#fff" strokeWidth="1.5" />
          </SmallIcon>
        </button>
        <button type="button" className={`h-5 w-[61px] gap-1 ${pushButton}`}>
          <svg viewBox="0 0 16 12" className="h-3 w-4">
            <path d="M.5 3.5h8v-3l7 5.500-7 5.500v-3h-8z" fill="#8fcf3f" stroke="#6ba328" />
          </svg>
          Zoom
        </button>
      </div>
    </section>
  );
};

/* ---------- map ---------- */

type Point = [number, number];

const places: Point[] = [
  [415, 201], [528, 169], [602, 181], [441, 238], [451, 240], [474, 258], [593, 262], [630, 285], [749, 215], [830, 212],
  [798, 250], [839, 264], [886, 254], [784, 307], [801, 304], [836, 305], [850, 305], [880, 300], [897, 288], [899, 287],
  [730, 294], [661, 310], [502, 307], [505, 313], [523, 330], [522, 345], [503, 374], [680, 337], [693, 349], [703, 375],
  [719, 380], [741, 382], [849, 343], [922, 359], [918, 381], [851, 401], [955, 399], [924, 420], [647, 395], [662, 411],
  [720, 425], [801, 446], [878, 447], [866, 469], [658, 459], [831, 420], [804, 487], [937, 472], [961, 566], [1313, 385],
  [1291, 419], [1279, 445], [1220, 482], [1176, 486], [1145, 496], [1236, 528], [1241, 545], [1145, 640], [1064, 520], [1075, 518],
];

const hubs: { at: Point; spokes: Point[] }[] = [
  { at: [534, 195], spokes: [[549, 197]] },
  { at: [631, 241], spokes: [[623, 250]] },
  { at: [646, 262], spokes: [[677, 250]] },
  { at: [492, 282], spokes: [[463, 304]] },
  { at: [715, 356], spokes: [[730, 357]] },
  { at: [763, 377], spokes: [[757, 346]] },
  { at: [783, 390], spokes: [[789, 416], [794, 416]] },
  { at: [753, 427], spokes: [[773, 421]] },
  { at: [606, 374], spokes: [[602, 368], [602, 373], [607, 373], [586, 394], [613, 389], [602, 394], [601, 393]] },
  { at: [599, 426], spokes: [[597, 400]] },
  { at: [550, 423], spokes: [[517, 410], [516, 409], [554, 426], [557, 437]] },
  { at: [585, 451], spokes: [[570, 453], [569, 453], [590, 440], [591, 458], [586, 453]] },
  { at: [553, 461], spokes: [[559, 461], [543, 464], [410, 490], [490, 490]] },
  { at: [576, 468], spokes: [[581, 469], [564, 476]] },
  { at: [615, 475], spokes: [[629, 469], [623, 491]] },
  { at: [673, 441], spokes: [[661, 437]] },
  { at: [666, 519], spokes: [[636, 505], [648, 507], [672, 515], [701, 500], [650, 544]] },
  { at: [716, 543], spokes: [[696, 528], [715, 527], [714, 544], [719, 571], [703, 587]] },
  { at: [747, 557], spokes: [[740, 541], [749, 549], [748, 550], [746, 571], [730, 571]] },
  { at: [760, 560], spokes: [[773, 554], [751, 571]] },
  { at: [749, 500], spokes: [[762, 501]] },
  { at: [830, 440], spokes: [[831, 436], [829, 439]] },
  { at: [835, 442], spokes: [[831, 453], [831, 452]] },
  { at: [824, 468], spokes: [[837, 474]] },
  { at: [879, 461], spokes: [[890, 464], [890, 474]] },
  { at: [923, 493], spokes: [[917, 474], [917, 485], [920, 497]] },
  { at: [948, 435], spokes: [[945, 450]] },
  { at: [988, 454], spokes: [[976, 453]] },
  { at: [948, 468], spokes: [[965, 503]] },
  { at: [1034, 492], spokes: [[1002, 507], [1022, 526]] },
  { at: [808, 497], spokes: [[810, 506], [837, 517]] },
  { at: [888, 506], spokes: [[877, 506]] },
  { at: [901, 527], spokes: [[912, 528], [938, 530], [874, 544]] },
  { at: [907, 556], spokes: [[890, 571]] },
  { at: [810, 541], spokes: [[785, 525], [783, 533], [799, 538], [805, 560], [810, 560], [821, 554]] },
  { at: [788, 579], spokes: [[783, 571], [777, 577], [797, 569], [789, 576], [789, 581], [794, 581], [762, 597]] },
  { at: [825, 576], spokes: [[810, 571], [816, 575], [819, 583], [826, 581], [826, 587], [831, 597]] },
  { at: [868, 588], spokes: [[858, 582], [863, 586], [863, 597], [871, 594], [878, 598], [901, 597], [902, 603], [874, 619], [886, 625]] },
  { at: [976, 575], spokes: [[981, 571], [982, 571], [981, 570], [1002, 581]] },
  { at: [965, 606], spokes: [[944, 597], [954, 619]] },
  { at: [940, 631], spokes: [[942, 622], [945, 624], [947, 621], [944, 651], [944, 677], [890, 677]] },
  { at: [972, 638], spokes: [[965, 623], [981, 630], [992, 641], [981, 656]] },
  { at: [1038, 606], spokes: [[1008, 608]] },
  { at: [1040, 615], spokes: [[1038, 616], [1050, 624]] },
  { at: [1049, 601], spokes: [[1050, 608]] },
  { at: [1081, 511], spokes: [[1082, 501], [1077, 506]] },
  { at: [1162, 517], spokes: [[1184, 517]] },
  { at: [1149, 584], spokes: [[1146, 557], [1152, 597]] },
  { at: [1177, 584], spokes: [[1178, 554], [1178, 592], [1200, 581]] },
  { at: [1177, 660], spokes: [[1173, 651]] },
  { at: [1196, 683], spokes: [[1189, 691]] },
];

const MapCanvas = () => (
  <div className="min-w-0 flex-1 border border-r-0 border-[#828790] bg-white">
    <svg className="h-full w-full" role="img" aria-label="Map canvas">
      {/* origin of the map extent */}
      <g transform="translate(-404 -157)">
        <g fill="#7a8788" stroke="#2a2f30">
          {hubs.flatMap(({ spokes }) => spokes).map(([x, y]) => (
            <circle key={`${x}-${y}`} cx={x} cy={y} r="3.8" />
          ))}
        </g>
        <g fill="#d5b43c" stroke="#2f2a18">
          {[...places, ...hubs.map(({ at }) => at)].map(([x, y]) => (
            <circle key={`${x}-${y}`} cx={x} cy={y} r="3.8" />
          ))}
        </g>
        <g stroke="#9b5331">
          {hubs.flatMap(({ at, spokes }) =>
            spokes.map(([x, y]) => <line key={`${at}-${x}-${y}`} x1={at[0]} y1={at[1]} x2={x} y2={y} />)
          )}
        </g>
      </g>
    </svg>
  </div>
);

/* ---------- status bar ---------- */

const StatusBar = () => (
  <footer className={`flex h-[26px] items-center pt-0.5 pl-[5px] text-[10px] ${monoFont}`}>
    <label className="flex h-5 w-[246px] items-center rounded-sm border border-[#e3e9ef] bg-white pl-2">
      <svg viewBox="0 0 13 13" className="h-[13px] w-[13px]" fill="none" stroke="#999">
        <circle cx="5.5" cy="5.5" r="4.5" strokeWidth="1.3" />
        <path d="M9 9l3.5 3.5" strokeWidth="1.8" />
      </svg>
      <input
        aria-label="Locate"
        placeholder="Type to locate (Ctrl+K)"
        className="ml-1.5 w-full min-w-0 outline-none placeholder:text-[#7b7b7b]"
      />
    </label>
    <div className="relative pr-[9px] pl-[9px]">
      <span>187 hub/spoke lines written</span>
      <span className="pointer-events-none absolute -top-1.5 right-0 -bottom-1 -left-3 border-[3px] border-[#fb3636]" />
    </div>
    <div className="ml-auto flex items-center whitespace-nowrap">
      <label htmlFor="coordinate">Coordinate</label>
      <input
        id="coordinate"
        defaultValue="-106.32,24.56"
        className="ml-1 h-5 w-[87px] rounded-sm border border-[#e3e9ef] bg-white px-0.5 outline-none"
      />
      <button type="button" aria-label="Toggle extents" className="mx-1">
        <SmallIcon>
          <path d="M8 6l4-5 3-1M10 8l5-4" stroke="#333" fill="none" />
          <ellipse cx="5" cy="4" rx="3" ry="5" transform="rotate(-45 5 4)" fill="#e6e6e6" stroke="#222" />
          <ellipse cx="4" cy="7.5" rx="2.5" ry="5" transform="rotate(-60 4 7.5)" fill="#999" stroke="#222" />
          <ellipse cx="11" cy="11" rx="3.2" ry="4.2" transform="rotate(-20 11 11)" fill="#e6e6e6" stroke="#222" strokeWidth="1.3" />
          <circle cx="11.5" cy="12.5" r="1.3" fill="#555" />
        </SmallIcon>
      </button>
      <label htmlFor="scale" className="ml-[9px]">
        Scale
      </label>
      <span className="relative ml-[3px] flex">
        <select
          id="scale"
          defaultValue="1:6203872"
          className="h-5 w-[79px] appearance-none rounded-sm border border-[#e3e9ef] bg-white px-0.5 outline-none"
        >
          <option>1:6203872</option>
          <option>1:1000000</option>
        </select>
        <svg viewBox="0 0 8 4" className="pointer-events-none absolute top-2 right-1 h-1 w-2">
          <path d="M0 0h8l-4 4z" fill="#000" />
        </svg>
      </span>
      <button type="button" aria-label="Lock scale" className="mr-2 ml-3">
        <svg viewBox="0 0 12 15" className="h-[15px] w-3">
          <path d="M2.5 7v-3q0-3 3.5-3t3.5 3v3" fill="none" stroke="#888" strokeWidth="1.5" />
          <rect x="0.5" y="6.5" width="11" height="8" rx="1" fill="#5f5f5f" />
        </svg>
      </button>
      <label htmlFor="magnifier" className="mr-1">
        Magnifier
      </label>
      <SpinBox id="magnifier" value="100%" width="w-[86px]" />
      <label htmlFor="rotation" className="mr-[9px] ml-2.5">
        Rotation
      </label>
      <SpinBox id="rotation" value="0.0 °" width="w-[84px]" />
      <span className="ml-[7px] flex items-center gap-[5px]">
        <CheckBox id="render" checked />
        <label htmlFor="render">Render</label>
      </span>
      <button type="button" className="ml-[18px] flex items-center gap-1">
        <svg viewBox="0 0 15 15" className="h-[15px] w-[15px]">
          <circle cx="7.5" cy="7.5" r="6.5" fill="#7f7f7f" />
          <path
            d="M1 5h13M1 10h13M0 7.5h15M7.5 0v15M4 2q-2 5.5 0 11M11 2q2 5.5 0 11"
            stroke="#e8e8e8"
            strokeWidth="0.7"
            fill="none"
          />
        </svg>
        EPSG:4326
      </button>
      <button type="button" aria-label="Messages" className="ml-[22px]">
        <svg viewBox="0 0 16 15" className="h-[15px] w-4">
          <path d="M8 1q7.500 0 7.500 5.500 0 3-3 4.500l1 3.500-4-2.500q-9 .5-9-5.500 0-5.500 7.500-5.500z" fill="#555" />
          <path d="M4 5.500h2v2h-2zM7 5.500h2v2h-2zM10 5.500h2v2h-2z" fill="#eee" />
        </svg>
      </button>
      <svg viewBox="0 0 9 9" className="mt-3 mr-[3px] ml-3.5 h-[9px] w-[9px]">
        <path d="M7 1h2v2h-2zM4 4h2v2h-2zM7 4h2v2h-2zM1 7h2v2h-2zM4 7h2v2h-2zM7 7h2v2h-2z" fill="#b8b8b8" />
      </svg>
    </div>
  </footer>
);

/* ---------- window ---------- */

const TitleBar = () => (
  <header className="flex h-[30px] items-start justify-between border-t-[3px] border-[#0d2457] bg-[linear-gradient(90deg,#a9cfe0_0px,#dfe7e4_30px,#b6c6e6_60px,#bccbe8_150px,#a2abb8_165px,#a9b0bb_180px,#5a78b4_190px,#5a78b4_218px,#e4ebf5_232px,#f0f4fa_255px,#4d6eae_268px,#4469ab_295px,#86b3a7_310px,#bfe0d6_332px,#3d5fa4_346px,#3c60a8_700px,#4f78bd_1060px,#8ea9d8_1110px,#91acda_1170px,#5180c8_1184px,#6f97d4_100%)]">
    <div className="flex items-center gap-[5px] pt-[5px] pl-[7px]">
      <svg viewBox="0 0 16 16" className="h-4 w-4">
        <circle cx="7.5" cy="7.5" r="5.7" fill="#eef3e4" stroke="#6fa330" strokeWidth="3.2" />
        <path d="M8 8l6.5 6.5" stroke="#4f8a1f" strokeWidth="3" />
        <path d="M6 6h4l-1.5 4z" fill="#f08c2e" />
      </svg>
      <h1 className="text-xs leading-4">*Untitled Project - QGIS</h1>
    </div>
    <div className="mr-1 flex h-[18px] rounded-b-[4px] border border-t-0 border-[#1d2f52]">
      <button
        type="button"
        aria-label="Minimize"
        className="flex w-[27px] items-center justify-center rounded-bl-[3px] border border-[#c4d3ec] bg-linear-to-b from-[#b1c3e2] via-[#6787bd] to-[#8fadd9]"
      >
        <svg viewBox="0 0 12 5" className="mt-1 h-[5px] w-3">
          <path d="M.5.5h11v4h-11z" fill="#fff" stroke="#444" />
        </svg>
      </button>
      <button
        type="button"
        aria-label="Maximize"
        className="flex w-[27px] items-center justify-center border border-[#c4d3ec] bg-linear-to-b from-[#b1c3e2] via-[#6787bd] to-[#8fadd9]"
      >
        <svg viewBox="0 0 12 10" className="h-2.5 w-3">
          <path d="M.5.5h11v9h-11zM4 3.5h4v3h-4z" fill="#fff" stroke="#444" fillRule="evenodd" />
        </svg>
      </button>
      <button
        type="button"
        aria-label="Close"
        className="flex w-[47px] items-center justify-center rounded-br-[3px] border border-[#e0a9a0] bg-linear-to-b from-[#dc9d92] via-[#bd3520] to-[#d4684c]"
      >
        <svg viewBox="0 0 12 10" className="h-2.5 w-3">
          <path
            d="M1 .5h3l2 2.5 2-2.5h3l-3.5 4.5 3.5 4.5h-3l-2-2.500-2 2.500h-3l3.500-4.500z"
            fill="#fff"
            stroke="#444"
            strokeWidth="0.8"
          />
        </svg>
      </button>
    </div>
  </header>
);

const App = () => {
  const [tool, setTool] = useState("pan");

  return (
    <div className={`relative flex min-h-screen flex-col bg-[#3c4248] text-xs text-black ${uiFont}`}>
      <TitleBar />
      <div className="mb-[3px] flex flex-1">
        <div className="w-1.5 bg-linear-to-b from-[#b4cfe2] from-0% via-[#2a57a4] via-40% to-[#1b3f8d]" />
        <div className="flex min-w-0 flex-1 flex-col border border-[#2e3f60] bg-[#efefef]">
          <nav className="flex h-[22px] items-center bg-linear-to-b from-white from-20% via-[#d8dff0] via-40% to-[#e2e8f6] pt-0.5">
            {menus.map(([before, key, after]) => (
              <button key={before + key + after} type="button" className="px-2">
                {before}
                <span className="underline">{key}</span>
                {after}
              </button>
            ))}
          </nav>
          <div className="border-t border-[#b0b0b0]">
            <ToolRow>
              <ToolGroup tools={fileTools} />
              <ToolGroup tools={navTools} active={tool} onPick={setTool} />
              <ToolGroup tools={attributeTools} last />
            </ToolRow>
            <ToolRow>
              <ToolGroup tools={sourceTools} />
              <ToolGroup tools={editTools} />
              <ToolGroup tools={labelTools} />
              <ToolGroup tools={[{ icon: "search" }]} />
              <ToolGroup tools={pluginTools} />
              <ToolGroup tools={[{ icon: "help" }]} />
              <ToolGroup tools={extraTools} last />
            </ToolRow>
            <ToolRow>
              <ToolGroup tools={[{ icon: "plug" }]} last />
            </ToolRow>
          </div>
          <main className="flex flex-1">
            <aside className="mr-1 flex w-[392px] shrink-0 flex-col pt-px">
              <LayersPanel />
              <SearchPanel />
            </aside>
            <MapCanvas />
          </main>
          <StatusBar />
        </div>
        <div className="w-1 bg-linear-to-b from-[#8ba7d0] from-5% via-[#7c8088] via-12% to-[#34373b] to-30%" />
      </div>
      <button
        type="button"
        aria-label="Cloud drive"
        className="absolute top-[11px] right-0 flex h-[25px] w-[29px] items-center justify-center rounded-l-[4px] bg-[#4f95fb]"
      >
        <svg viewBox="0 0 20 16" className="h-4 w-5" fill="none" stroke="#fff" strokeWidth="2.4">
          <circle cx="10" cy="5" r="3.7" />
          <circle cx="5.5" cy="11" r="3.7" />
          <circle cx="14.5" cy="11" r="3.7" />
        </svg>
      </button>
    </div>
  );
};

export default App;
